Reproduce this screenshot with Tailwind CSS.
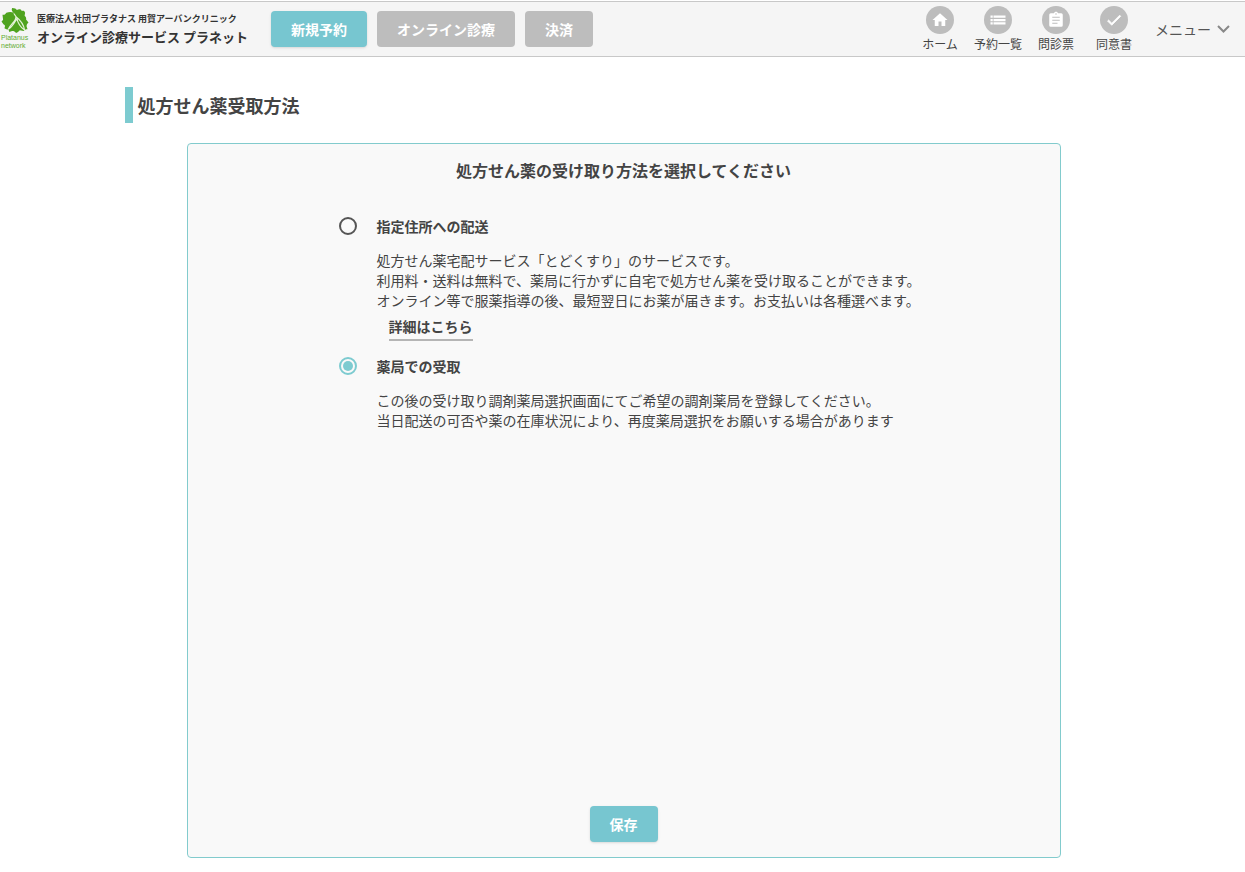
<!DOCTYPE html>
<html lang="ja">
<head>
<meta charset="utf-8">
<meta name="viewport" content="width=device-width, initial-scale=1">
<title>処方せん薬受取方法</title>
<script src="https://cdn.jsdelivr.net/npm/@tailwindcss/browser@4"></script>
</head>
<body class="flex min-h-screen flex-col bg-white font-['Noto_Sans_CJK_JP',sans-serif] text-sm text-[#444]">
<header class="mt-px flex h-14 shrink-0 items-center border-y border-[#c8c8c8] bg-[#f5f5f5]">
  <a href="#" class="flex shrink-0 items-center gap-1.5 text-[#333]">
    <span class="flex w-[31px] flex-col items-start">
      <svg class="ml-px h-[26px] w-7" viewBox="0 0 28 27" aria-hidden="true">
        <path fill="#4fa31f" d="M13 5C11 4 10 2 11 0c3 0 4 1 5 2 2-1 4-1 5 1 2-.5 3 0 3.500 2L24 8c1 1 2 2 1.500 4l2.500 3c-1 1-2 2-2 4l1 3c-2 0-3 .5-4 2l-4-1c-1 1-2 2-4 3-1-1.500-2-2-4-2l-3 1c0-2-1-3-3-3l-2-1c1-2 1-3-1-4L0 14c1-1 2-1 1.500-3L1 7c2 .5 3-.5 4-2 3-1 5-1 8 0z"/>
        <path fill="none" stroke="#e4f3d8" stroke-width="1.200" stroke-linecap="round" stroke-linejoin="round" d="M13 6l2 3c0 5-5 7-8 13 4-2 6-6 9-11 1 5 4 9 8 12-1-6-5-11-9-14"/>
      </svg>
      <span class="ml-px flex flex-col font-['Liberation_Sans',sans-serif] text-[7px] leading-[8px] text-[#62ac32]"><span>Platanus</span><span>network</span></span>
    </span>
    <span class="flex flex-col gap-1 whitespace-nowrap font-bold">
      <span class="text-[9px] leading-3">医療法人社団プラタナス 用賀アーバンクリニック</span>
      <span class="text-[13px] leading-4">オンライン診療サービス プラネット</span>
    </span>
  </a>
  <nav class="ml-[23px] flex shrink-0 gap-2.5 font-bold text-white" aria-label="予約">
    <button type="button" class="h-9 rounded bg-[#77c6d0] px-5 shadow-sm">新規予約</button>
    <button type="button" class="h-9 rounded bg-[#bdbdbd] px-5">オンライン診療</button>
    <button type="button" class="h-9 rounded bg-[#bdbdbd] px-5">決済</button>
  </nav>
  <nav class="ml-auto flex shrink-0 items-center pr-[15px]" aria-label="メイン">
    <a href="#" class="flex w-[58px] flex-col items-center gap-0.5 whitespace-nowrap text-xs">
      <span class="flex size-7 items-center justify-center rounded-full bg-[#bdbdbd]"><svg class="size-[18px]" viewBox="0 0 24 24" fill="#fff" aria-hidden="true"><path d="M10 20v-6h4v6h5v-8h3L12 3 2 12h3v8z"/></svg></span>ホーム</a>
    <a href="#" class="flex w-[58px] flex-col items-center gap-0.5 whitespace-nowrap text-xs">
      <span class="flex size-7 items-center justify-center rounded-full bg-[#bdbdbd]"><svg class="size-[18px]" viewBox="0 0 24 24" fill="#fff" aria-hidden="true"><path d="M2 6h3v3H2zM6 6h16v3H6zM2 10.500h3v3H2zM6 10.500h16v3H6zM2 15h3v3H2zM6 15h16v3H6z"/></svg></span>予約一覧</a>
    <a href="#" class="flex w-[58px] flex-col items-center gap-0.5 whitespace-nowrap text-xs">
      <span class="flex size-7 items-center justify-center rounded-full bg-[#bdbdbd]"><svg class="size-[18px]" viewBox="0 0 24 24" fill="#fff" aria-hidden="true"><path d="M19 3h-4.180C14.400 1.840 13.300 1 12 1s-2.400.840-2.820 2H5a2 2 0 0 0-2 2v14a2 2 0 0 0 2 2h14a2 2 0 0 0 2-2V5a2 2 0 0 0-2-2zm-7 0a1 1 0 1 1 0 2 1 1 0 0 1 0-2zm2 14H7v-1.500h7v1.500zm3-4H7v-1.500h10v1.500zm0-4H7V7.500h10v1.500z"/></svg></span>問診票</a>
    <a href="#" class="flex w-[58px] flex-col items-center gap-0.5 whitespace-nowrap text-xs">
      <span class="flex size-7 items-center justify-center rounded-full bg-[#bdbdbd]"><svg class="size-[18px]" viewBox="0 0 24 24" fill="#fff" stroke="#fff" aria-hidden="true"><path d="M9 16.170 4.830 12l-1.420 1.410L9 19 21 7l-1.410-1.410z"/></svg></span>同意書</a>
    <button type="button" class="ml-3 flex items-center gap-1.5 whitespace-nowrap text-[#555]">メニュー
      <svg class="h-2 w-[13px]" viewBox="0 0 13 8" fill="none" stroke="#888" stroke-width="2" aria-hidden="true"><path d="M1 1l5.500 5.500L12 1"/></svg>
    </button>
  </nav>
</header>

<main class="mx-auto flex w-4/5 flex-1 flex-col pt-[30px] pb-3.5">
  <h1 class="flex h-9 items-center border-l-8 border-[#7dcbd0] pl-[5px] text-lg font-bold">処方せん薬受取方法</h1>
  <form class="mt-5 mr-[60px] ml-[62px] flex flex-1 flex-col items-center rounded border border-[#82cbcd] bg-[#f9f9f9] pb-[15px]">
    <h2 class="mt-3.5 text-base leading-6 font-bold">処方せん薬の受け取り方法を選択してください</h2>
    <div class="flex w-full flex-col pr-4 pl-[151px]">
      <div class="mt-[34px] flex items-start gap-5">
        <input id="delivery" type="radio" name="method" class="mt-px size-[18px] shrink-0 appearance-none rounded-full border-2 border-[#555] bg-clip-content p-0.5 checked:border-[#7dcbd0] checked:bg-[#7dcbd0]">
        <div>
          <label for="delivery" class="block leading-5 font-bold">指定住所への配送</label>
          <p class="mt-3.5 leading-5">処方せん薬宅配サービス「とどくすり」のサービスです。<br>利用料・送料は無料で、薬局に行かずに自宅で処方せん薬を受け取ることができます。<br>オンライン等で服薬指導の後、最短翌日にお薬が届きます。お支払いは各種選べます。</p>
          <a href="#" class="mt-1 ml-3 inline-block h-[27px] border-b-2 border-[#b5b5b5] leading-6 font-bold">詳細はこちら</a>
        </div>
      </div>
      <div class="mt-[15px] flex items-start gap-5">
        <input id="pharmacy" type="radio" name="method" checked class="mt-px size-[18px] shrink-0 appearance-none rounded-full border-2 border-[#555] bg-clip-content p-0.5 checked:border-[#7dcbd0] checked:bg-[#7dcbd0]">
        <div>
          <label for="pharmacy" class="block leading-5 font-bold">薬局での受取</label>
          <p class="mt-3.5 leading-5">この後の受け取り調剤薬局選択画面にてご希望の調剤薬局を登録してください。<br>当日配送の可否や薬の在庫状況により、再度薬局選択をお願いする場合があります</p>
        </div>
      </div>
    </div>
    <button type="submit" class="mt-auto h-9 rounded bg-[#77c6d0] px-5 font-bold text-white shadow-sm">保存</button>
  </form>
</main>
</body>
</html>
